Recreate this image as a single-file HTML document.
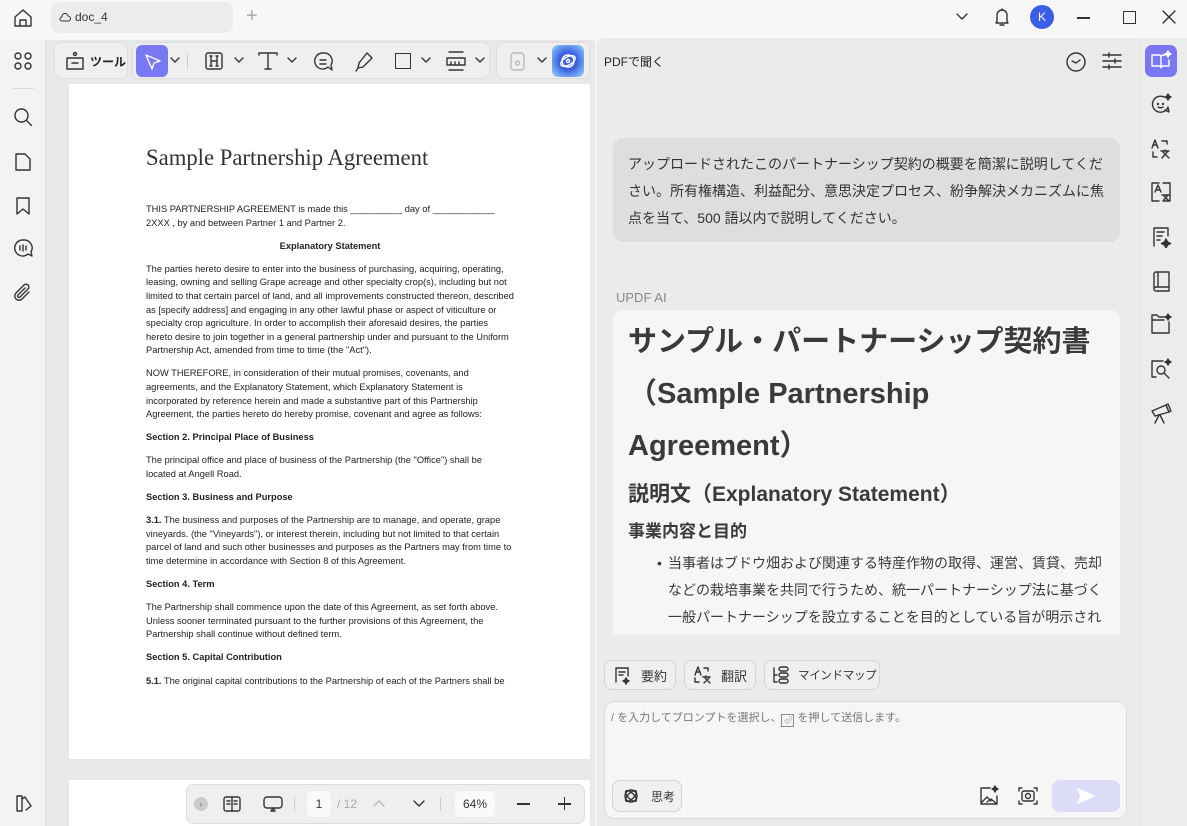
<!DOCTYPE html>
<html><head><meta charset="utf-8">
<style>
*{margin:0;padding:0;box-sizing:border-box}
body{width:1187px;height:826px;overflow:hidden;background:#f7f7f7;font-family:"Liberation Sans","Noto Sans CJK JP",sans-serif;position:relative;color:#222}
.a{position:absolute}
svg{fill:none;stroke:#333;stroke-width:1.4;stroke-linecap:round;stroke-linejoin:round;flex-shrink:0}
.doc{font-family:"Liberation Sans",sans-serif;font-size:9.3px;line-height:13.6px;color:#222}
.doc p{margin-bottom:9.5px}
.doc b{font-weight:bold}
.jp{font-family:"Liberation Sans","Noto Sans CJK JP",sans-serif}
.btn{position:absolute;top:660px;height:30px;border:1px solid #d4d4d4;border-radius:8px;background:#efefef;font-size:13px;color:#333;display:flex;align-items:center;padding-left:7px;gap:9px;white-space:nowrap;overflow:hidden}
</style></head><body>
<!-- top bar -->
<svg class="a" style="left:13px;top:8px" width="20" height="20" viewBox="0 0 20 20"><path d="M2 9L10 2l8 7v9H2z"/><path d="M7 18v-6h6v6"/></svg>
<div class="a" style="left:51px;top:2px;width:182px;height:31px;background:#ececec;border-radius:8px"></div>
<svg class="a" style="left:59px;top:12px" width="12" height="10" viewBox="0 0 12 10"><path d="M3 9h6a2.5 2.5 0 0 0 0-5 3 3 0 0 0-6 1 2 2 0 0 0 0 4z" stroke-width="1"/></svg>
<div class="a" style="left:75px;top:10px;font-size:12px;color:#333">doc_4</div>
<div class="a" style="left:246px;top:5px;font-size:20px;color:#aaa;font-weight:300">+</div>
<svg class="a" style="left:955px;top:12px" width="14" height="10"><path d="M2 2l5 5 5-5"/></svg>
<svg class="a" style="left:993px;top:7px" width="18" height="20" viewBox="0 0 18 20"><path d="M4 14V8a5 5 0 0 1 10 0v6l1 2H3z"/><path d="M7 18h4"/><path d="M9 2v1"/></svg>
<div class="a" style="left:1030px;top:5px;width:24px;height:24px;border-radius:50%;background:#3b5ee6;color:#fff;font-size:12px;text-align:center;line-height:24px">K</div>
<div class="a" style="left:1077px;top:17px;width:13px;height:1.5px;background:#333"></div>
<div class="a" style="left:1123px;top:11px;width:13px;height:13px;border:1.5px solid #333"></div>
<svg class="a" style="left:1162px;top:10px" width="14" height="14"><path d="M1 1l12 12M13 1L1 13"/></svg>

<!-- left sidebar -->
<div class="a" style="left:0;top:40px;width:46px;height:786px;background:#f3f3f3;border-right:1px solid #e4e4e4"></div>
<svg class="a" style="left:13px;top:51px" width="20" height="20" viewBox="0 0 20 20"><circle cx="5" cy="5" r="3"/><circle cx="15" cy="5" r="3"/><circle cx="5" cy="15" r="3"/><circle cx="15" cy="15" r="3"/></svg>
<div class="a" style="left:12px;top:88px;width:22px;height:1px;background:#ddd"></div>
<svg class="a" style="left:13px;top:107px" width="20" height="20"><circle cx="8.5" cy="8.5" r="6.5"/><path d="M13.5 13.5l5 5"/></svg>
<svg class="a" style="left:14px;top:152px" width="18" height="20"><path d="M2 2h9l5 5v11H2z"/></svg>
<svg class="a" style="left:15px;top:196px" width="16" height="20"><path d="M2 2h12v16l-6-5-6 5z"/></svg>
<svg class="a" style="left:12px;top:238px" width="22" height="20"><path d="M11 2a8 8 0 1 0 5 14l4 2-1-4A8 8 0 0 0 11 2z"/><path d="M8 8v4M11 7v6M14 8v4"/></svg>
<svg class="a" style="left:13px;top:283px" width="20" height="20"><path d="M16 9l-7 7a4 4 0 0 1-6-6l8-8a2.5 2.5 0 0 1 4 4l-8 8a1 1 0 0 1-2-2l7-7"/></svg>
<svg class="a" style="left:14px;top:793px" width="20" height="20"><path d="M3 3h5v15H3z"/><path d="M8 6l3-2 6 9-5 4"/></svg>

<!-- document area -->
<div class="a" style="left:46px;top:40px;width:549px;height:786px;background:#e8e8e8"></div>
<div class="a" style="left:54px;top:42px;width:74px;height:37px;background:#efefef;border-radius:8px;border:1px solid #dedede"></div>
<svg class="a" style="left:64px;top:50px" width="22" height="22"><path d="M3 8h16v11H3z"/><path d="M8 13h6"/><circle cx="11" cy="4" r="1.5"/></svg>
<div class="a jp" style="left:90px;top:53px;font-size:12px;font-weight:bold;color:#222">ツール</div>
<div class="a" style="left:132px;top:42px;width:358px;height:37px;background:#efefef;border-radius:8px;border:1px solid #dedede"></div>
<div class="a" style="left:136px;top:45px;width:32px;height:32px;background:#7a77f2;border-radius:6px"></div>
<svg class="a" style="left:144px;top:53px" width="18" height="18"><path d="M2 2l14 6-6 2-2 6z" stroke="#fff"/></svg>
<svg class="a" style="left:170px;top:57px" width="10" height="6"><path d="M1 1l4 4 4-4"/></svg>
<div class="a" style="left:187px;top:53px;width:1px;height:16px;background:#ccc"></div>
<svg class="a" style="left:204px;top:51px" width="20" height="20"><rect x="2" y="2" width="16" height="16" rx="2"/><path d="M7 5v10M13 5v10M7 10h6M6 5h2M12 5h2M6 15h2M12 15h2"/></svg>
<svg class="a" style="left:234px;top:57px" width="10" height="6"><path d="M1 1l4 4 4-4"/></svg>
<svg class="a" style="left:257px;top:51px" width="22" height="20"><path d="M2 4V2h18v2M11 2v16M8 18h6"/></svg>
<svg class="a" style="left:287px;top:57px" width="10" height="6"><path d="M1 1l4 4 4-4"/></svg>
<svg class="a" style="left:312px;top:51px" width="22" height="22"><path d="M11 2a8 8 0 1 0 5 14l4 3-1-5A8 8 0 0 0 11 2z"/><path d="M8 9h6M8 13h6"/></svg>
<svg class="a" style="left:354px;top:51px" width="20" height="22"><path d="M13 2l5 5-9 9-5 1 1-5z"/><path d="M4 17l-2 3"/></svg>
<div class="a" style="left:395px;top:53px;width:16px;height:16px;border:1.4px solid #333"></div>
<svg class="a" style="left:421px;top:57px" width="10" height="6"><path d="M1 1l4 4 4-4"/></svg>
<svg class="a" style="left:445px;top:50px" width="22" height="22"><path d="M4 2h14M4 20h14M2 8h18v7H2zM6 12v3M10 12v3M14 12v3"/></svg>
<svg class="a" style="left:475px;top:57px" width="10" height="6"><path d="M1 1l4 4 4-4"/></svg>
<div class="a" style="left:496px;top:42px;width:94px;height:37px;background:#efefef;border-radius:8px;border:1px solid #dedede"></div>
<svg class="a" style="left:508px;top:51px" width="20" height="20"><rect x="3" y="2" width="13" height="17" rx="3" stroke="#bbb"/><circle cx="9.5" cy="12" r="2" stroke="#bbb"/></svg>
<svg class="a" style="left:537px;top:57px" width="10" height="6"><path d="M1 1l4 4 4-4"/></svg>
<div class="a" style="left:552px;top:45px;width:32px;height:32px;border-radius:6px;background:radial-gradient(circle,#3d63e0 40%,#9fd8ff 100%)"></div>
<svg class="a" style="left:558px;top:51px" width="20" height="20"><ellipse cx="10" cy="10" rx="8" ry="4" stroke="#fff" transform="rotate(-30 10 10)"/><circle cx="10" cy="10" r="6" stroke="#fff"/><circle cx="10" cy="10" r="1.5" stroke="#fff"/></svg>

<!-- page -->
<div class="a" style="left:69px;top:84px;width:521px;height:675px;background:#fff"></div>
<div class="a" style="left:69px;top:780px;width:521px;height:46px;background:#fff"></div>
<div class="a" style="left:146px;top:145px;font-family:'Liberation Serif',serif;font-size:22.7px;color:#333">Sample Partnership Agreement</div>
<div class="a doc" style="left:146px;top:203px;width:368px">
<p>THIS PARTNERSHIP AGREEMENT is made this __________ day of ____________<br>2XXX , by and between Partner 1 and Partner 2.</p>
<p style="text-align:center;font-weight:bold">Explanatory Statement</p>
<p>The parties hereto desire to enter into the business of purchasing, acquiring, operating, leasing, owning and selling Grape acreage and other specialty crop(s), including but not limited to that certain parcel of land, and all improvements constructed thereon, described as [specify address] and engaging in any other lawful phase or aspect of viticulture or specialty crop agriculture. In order to accomplish their aforesaid desires, the parties hereto desire to join together in a general partnership under and pursuant to the Uniform Partnership Act, amended from time to time (the "Act").</p>
<p>NOW THEREFORE, in consideration of their mutual promises, covenants, and agreements, and the Explanatory Statement, which Explanatory Statement is incorporated by reference herein and made a substantive part of this Partnership Agreement, the parties hereto do hereby promise, covenant and agree as follows:</p>
<p><b>Section 2. Principal Place of Business</b></p>
<p>The principal office and place of business of the Partnership (the "Office") shall be located at Angell Road.</p>
<p><b>Section 3. Business and Purpose</b></p>
<p><b>3.1.</b> The business and purposes of the Partnership are to manage, and operate, grape vineyards. (the "Vineyards"), or interest therein, including but not limited to that certain parcel of land and such other businesses and purposes as the Partners may from time to time determine in accordance with Section 8 of this Agreement.</p>
<p><b>Section 4. Term</b></p>
<p>The Partnership shall commence upon the date of this Agreement, as set forth above. Unless sooner terminated pursuant to the further provisions of this Agreement, the Partnership shall continue without defined term.</p>
<p><b>Section 5. Capital Contribution</b></p>
<p><b>5.1.</b> The original capital contributions to the Partnership of each of the Partners shall be</p>
</div>
<!-- bottom toolbar -->
<div class="a" style="left:186px;top:784px;width:399px;height:40px;background:#efefef;border:1px solid #dcdcdc;border-radius:8px"></div>
<div class="a" style="left:194px;top:797px;width:14px;height:14px;border-radius:50%;background:#ccc;color:#666;font-size:9px;text-align:center;line-height:14px">›</div>
<svg class="a" style="left:222px;top:795px" width="20" height="18"><rect x="2" y="2" width="16" height="14" rx="2"/><path d="M10 2v14M5 6h3M5 9h3M12 6h3M12 9h3"/></svg>
<svg class="a" style="left:262px;top:795px" width="22" height="18"><rect x="2" y="2" width="18" height="11" rx="3"/><path d="M9 16l2-3 2 3z"/></svg>
<div class="a" style="left:294px;top:797px;width:1px;height:14px;background:#ccc"></div>
<div class="a" style="left:307px;top:791px;width:24px;height:26px;background:#fafafa;border-radius:6px;font-size:12px;text-align:center;line-height:26px;color:#333">1</div>
<div class="a" style="left:337px;top:797px;font-size:12px;color:#aaa">/ 12</div>
<svg class="a" style="left:373px;top:800px" width="12" height="8"><path d="M1 6l5-5 5 5" stroke="#bbb"/></svg>
<svg class="a" style="left:413px;top:800px" width="12" height="8"><path d="M1 1l5 5 5-5"/></svg>
<div class="a" style="left:440px;top:797px;width:1px;height:14px;background:#ccc"></div>
<div class="a" style="left:455px;top:791px;width:40px;height:26px;background:#fafafa;border-radius:6px;font-size:12px;text-align:center;line-height:26px;color:#333">64%</div>
<div class="a" style="left:517px;top:803px;width:13px;height:1.5px;background:#333"></div>
<div class="a" style="left:558px;top:803px;width:13px;height:1.5px;background:#333"></div>
<div class="a" style="left:563.8px;top:797px;width:1.5px;height:13px;background:#333"></div>

<!-- right panel -->
<div class="a" style="left:596px;top:38px;width:544px;height:788px;background:#ebebeb;border-radius:8px 0 0 0"></div>
<div class="a jp" style="left:604px;top:53px;font-size:12px;color:#222">PDFで聞く</div>
<svg class="a" style="left:1065px;top:51px" width="22" height="22"><circle cx="11" cy="11" r="9"/><path d="M7 10l4 2 4-3"/></svg>
<svg class="a" style="left:1101px;top:51px" width="22" height="20"><path d="M2 4h18M2 10h18M2 16h18"/><path d="M8 2v4M14 8v4M8 14v4"/></svg>
<div class="a jp" style="left:613px;top:138px;width:507px;height:104px;background:#dedede;border-radius:10px;padding:13px 15px;font-size:14px;line-height:27px;color:#333">アップロードされたこのパートナーシップ契約の概要を簡潔に説明してください。所有権構造、利益配分、意思決定プロセス、紛争解決メカニズムに焦点を当て、500 語以内で説明してください。</div>
<div class="a" style="left:616px;top:290px;font-size:13px;color:#888">UPDF AI</div>
<div class="a jp" style="left:613px;top:310px;width:507px;height:325px;background:#f6f6f6;border-radius:10px 10px 0 0;padding:6px 15px;color:#3a3a3a;overflow:hidden;white-space:nowrap">
<div style="font-size:29px;font-weight:bold;line-height:52px">サンプル・パートナーシップ契約書<br>（Sample Partnership<br>Agreement）</div>
<div style="font-size:21px;font-weight:bold;line-height:26px;margin-top:10px">説明文（Explanatory Statement）</div>
<div style="font-size:17px;font-weight:bold;line-height:24px;margin-top:12px">事業内容と目的</div>
<div style="font-size:14px;line-height:27px;margin-top:6px;padding-left:40px;position:relative"><span style="position:absolute;left:29px">•</span>当事者はブドウ畑および関連する特産作物の取得、運営、賃貸、売却<br>などの栽培事業を共同で行うため、統一パートナーシップ法に基づく<br>一般パートナーシップを設立することを目的としている旨が明示され<br>ています。</div>
</div>
<div class="btn jp" style="left:604px;width:72px"><svg width="20" height="20"><path d="M4 17V3h12v8M7 7h6M7 10h4"/><path d="M14 13l1 2 2 1-2 1-1 2-1-2-2-1 2-1z" fill="#333"/></svg>要約</div>
<div class="btn jp" style="left:684px;width:72px"><svg width="20" height="20"><path d="M3 10L6 2l3 8M4 7h4M12 3h4v3M3 13v4h4M11 12h7M14 11v1M12 18l5-5M13 13l5 5"/></svg>翻訳</div>
<div class="btn jp" style="left:764px;width:116px;font-size:11.5px;gap:7px;padding-left:6px;letter-spacing:-0.3px"><svg width="20" height="20"><path d="M3 3v14M3 10h3M3 17h3"/><rect x="8" y="2" width="9" height="4" rx="2"/><rect x="8" y="8" width="9" height="4" rx="2"/><rect x="8" y="14" width="9" height="4" rx="2"/></svg>マインドマップ</div>
<div class="a" style="left:604px;top:701px;width:523px;height:118px;background:#f6f6f6;border:1px solid #dcdcdc;border-radius:10px"></div>
<div class="a jp" style="left:611px;top:709px;font-size:11px;color:#777">/ を入力してプロンプトを選択し、<span style="display:inline-block;width:13px;height:13px;border:1px solid #888;vertical-align:-2px;font-size:8px;text-align:center;line-height:11px">⏎</span> を押して送信します。</div>
<div class="a jp" style="left:612px;top:780px;width:70px;height:32px;border:1px solid #d4d4d4;border-radius:8px;background:#f0f0f0;font-size:12px;display:flex;align-items:center;gap:12px;padding-left:10px;color:#333"><svg width="16" height="16"><circle cx="8" cy="8" r="6"/><ellipse cx="8" cy="8" rx="7" ry="3" transform="rotate(45 8 8)"/><ellipse cx="8" cy="8" rx="7" ry="3" transform="rotate(-45 8 8)"/></svg>思考</div>
<svg class="a" style="left:978px;top:785px" width="22" height="22"><path d="M12 3H3v16h16v-8M3 18l6-6 4 4M9 17l4-3 6 5"/><path d="M17 1l1 2 2 1-2 1-1 2-1-2-2-1 2-1z" fill="#333"/></svg>
<svg class="a" style="left:1017px;top:785px" width="22" height="22"><path d="M2 6V3h3M17 3h3v3M2 16v3h3M17 19h3v-3"/><rect x="5" y="6" width="12" height="10" rx="2"/><circle cx="11" cy="11" r="2.5"/></svg>
<div class="a" style="left:1052px;top:780px;width:68px;height:32px;background:#dcdcf8;border-radius:8px"></div>
<svg class="a" style="left:1077px;top:788px" width="18" height="16"><path d="M1 1l16 7-16 7 3-7z" fill="#fff" stroke="#fff"/></svg>

<!-- right sidebar -->
<div class="a" style="left:1140px;top:38px;width:47px;height:788px;background:#ececec;border-left:1px solid #e0e0e0"></div>
<div class="a" style="left:1145px;top:45px;width:32px;height:32px;background:#7a77f2;border-radius:7px"></div>
<svg class="a" style="left:1150px;top:50px" width="22" height="22"><path d="M2 5h7a2 2 0 0 1 2 2v11a2 2 0 0 0-2-2H2zM11 7a2 2 0 0 1 2-2h2M11 18a2 2 0 0 1 2-2h6v-6" stroke="#fff"/><path d="M18 1l1 2 2 1-2 1-1 2-1-2-2-1 2-1z" fill="#fff" stroke="#fff"/></svg>
<svg class="a" style="left:1150px;top:93px" width="22" height="22"><path d="M14 4a8 8 0 1 0 4 10l1 5-4-2"/><circle cx="8" cy="11" r=".5"/><circle cx="13" cy="11" r=".5"/><path d="M8 14c1 1 4 1 5 0"/><path d="M18 1l1 2 2 1-2 1-1 2-1-2-2-1 2-1z" fill="#333"/></svg>
<svg class="a" style="left:1150px;top:138px" width="22" height="22"><path d="M2 10L5 2l3 8M3 7h4M12 3h5v3M3 14v5h4M11 13h8M15 12v1M12 20l6-7M13 14l6 6"/></svg>
<svg class="a" style="left:1150px;top:181px" width="22" height="22"><path d="M9 2H2v18h7M13 2h7v18h-7M5 11l3-7 3 7M6 9h4M12 14h7M13 20l5-6M14 15l5 5"/></svg>
<svg class="a" style="left:1150px;top:226px" width="22" height="22"><path d="M4 20V2h14v8M7 6h7M7 10h5M7 14h3"/><path d="M16 13l1.5 3 3 1.5-3 1.5-1.5 3-1.5-3-3-1.5 3-1.5z" fill="#333"/></svg>
<svg class="a" style="left:1150px;top:270px" width="22" height="22"><path d="M4 4a2 2 0 0 1 2-2h13v15H6a2 2 0 0 0-2 2V4zM4 19a2 2 0 0 0 2 2h13v-4M8 2v15"/></svg>
<svg class="a" style="left:1150px;top:313px" width="22" height="22"><path d="M14 4H9L7 2H2v18h17V9M2 7h12"/><path d="M18 1l1 2 2 1-2 1-1 2-1-2-2-1 2-1z" fill="#333"/></svg>
<svg class="a" style="left:1150px;top:358px" width="22" height="22"><path d="M13 3H2v16h4"/><circle cx="11" cy="12" r="4"/><path d="M14 15l5 5"/><path d="M18 1l1 2 2 1-2 1-1 2-1-2-2-1 2-1z" fill="#333"/></svg>
<svg class="a" style="left:1150px;top:402px" width="22" height="22"><path d="M2 9l14-6 3 7-14 4z"/><path d="M16 3l3 7 2-1-3-7z"/><path d="M9 13l-4 8M10 13l4 8"/></svg>
</body></html>
